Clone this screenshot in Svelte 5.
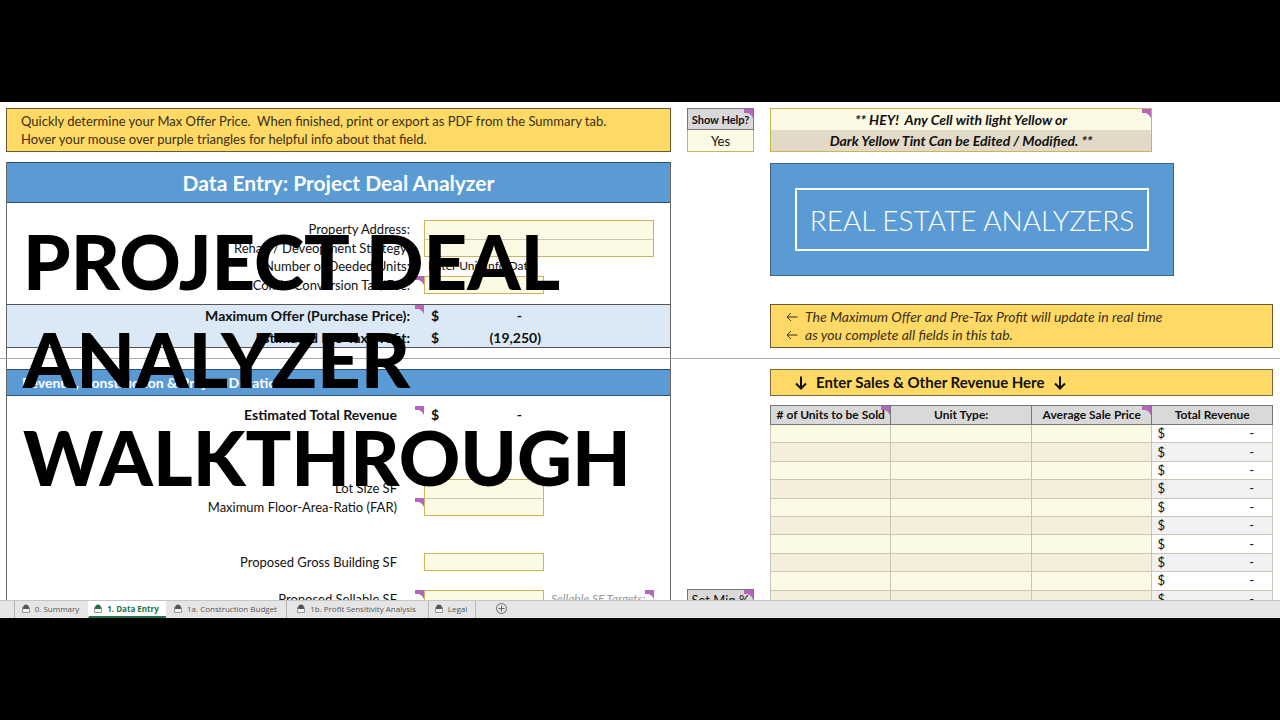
<script lang="ts">
  const revenueRows = Array.from({ length: 10 }, (_, i) => i + 1);

  const tabs = [
    { name: "0. Summary", width: 74 },
    { name: "1. Data Entry", width: 78 },
    { name: "1a. Construction Budget", width: 120 },
    { name: "1b. Profit Sensitivity Analysis", width: 142 },
    { name: "Legal", width: 47 },
  ];

  let activeTab: string = $state("1. Data Entry");
  let showHelp: string = $state("Yes");
</script>

{#snippet marker()}
  <svg class="marker" viewBox="0 0 9 9" aria-hidden="true">
    <path d="M0 0H9V9L7 6L4 4H0Z" fill="#b565bd" />
  </svg>
{/snippet}

{#snippet arrowLeft()}
  <svg class="arrow-left" viewBox="0 0 12 10" aria-hidden="true">
    <path d="M11.5 5H1M5 1L1 5L5 9" />
  </svg>
{/snippet}

{#snippet arrowDown()}
  <svg class="arrow-down" viewBox="0 0 12 14" aria-hidden="true">
    <path d="M6 0.5V12.5M1 7.5L6 12.5L11 7.5" />
  </svg>
{/snippet}

<div class="stage">
  <main class="workbook">
    <section class="pane frozen">
      <div class="column">
        <p class="note intro">
          Quickly determine your Max Offer Price.&nbsp; When finished, print or
          export as PDF from the Summary tab.<br />Hover your mouse over purple
          triangles for helpful info about that field.
        </p>
        <div class="panel entry">
          <h2>Data Entry: Project Deal Analyzer</h2>
          <div class="fields">
            <label for="address">Property Address:</label>
            <input id="address" class="wide" />
            <label for="strategy">Rehab / Deveopment Strategy:</label>
            <input id="strategy" class="wide joined" />
            <span class="label">Number of Deeded Units:</span>
            <span class="hint">Enter Unit Info Data</span>
            <label for="tax">Condo Conversion Tax/Fee:{@render marker()}</label>
            <input id="tax" />
          </div>
          <div class="totals">
            <span class="label">
              Maximum Offer (Purchase Price):{@render marker()}
            </span>
            <span class="money"><span>$</span><span class="dash">-</span></span>
            <span class="label">Estimated Pre-Tax Profit:</span>
            <span class="money"><span>$</span><span>(19,250)</span></span>
          </div>
        </div>
      </div>

      <div class="column">
        <div class="help">
          <label for="help">Show Help?{@render marker()}</label>
          <select id="help" bind:value={showHelp}>
            <option>Yes</option>
            <option>No</option>
          </select>
        </div>
      </div>

      <div class="column">
        <div class="legend">
          <p>** HEY!&nbsp; Any Cell with light Yellow or</p>
          <p class="dark">Dark Yellow Tint Can be Edited / Modified. **</p>
          {@render marker()}
        </div>
        <div class="brand"><span>REAL ESTATE ANALYZERS</span></div>
        <p class="note live">
          {@render arrowLeft()}The Maximum Offer and Pre-Tax Profit will update
          in real time<br />{@render arrowLeft()}as you complete all fields in
          this tab.
        </p>
      </div>
    </section>

    <section class="pane scrolled">
      <div class="panel revenue">
        <h3>Revenue, Construction &amp; Project Duration</h3>
        <div class="inputs">
          <span class="label strong r1">
            Estimated Total Revenue{@render marker()}
          </span>
          <span class="money strong r1">
            <span>$</span><span class="dash">-</span>
          </span>
          <label class="r5" for="lot">Lot Size SF</label>
          <input class="r5" id="lot" />
          <label class="r6" for="far">
            Maximum Floor-Area-Ratio (FAR){@render marker()}
          </label>
          <input class="r6 joined" id="far" />
          <label class="r9" for="gross">Proposed Gross Building SF</label>
          <input class="r9" id="gross" />
          <label class="r11" for="sellable">
            Proposed Sellable SF{@render marker()}
          </label>
          <input class="r11" id="sellable" />
          <span class="targets r11">
            Sellable SF Targets:{@render marker()}
          </span>
        </div>
      </div>

      <div class="column end">
        <div class="minimum">Set Min %{@render marker()}</div>
      </div>

      <div class="column sales">
        <h3 class="banner">
          {@render arrowDown()}Enter Sales &amp; Other Revenue Here{@render arrowDown()}
        </h3>
        <table>
          <thead>
            <tr>
              <th class="units"># of Units to be Sold{@render marker()}</th>
              <th class="type">Unit Type:</th>
              <th class="price">Average Sale Price{@render marker()}</th>
              <th>Total Revenue</th>
            </tr>
          </thead>
          <tbody>
            {#each revenueRows as row}
              <tr>
                <td><input aria-label="Units to be sold, row {row}" /></td>
                <td><input aria-label="Unit type, row {row}" /></td>
                <td><input aria-label="Average sale price, row {row}" /></td>
                <td class="total">
                  <div><span>$</span><span>-</span></div>
                </td>
              </tr>
            {/each}
          </tbody>
        </table>
      </div>
    </section>

    <h1>
      <span>PROJECT DEAL</span>
      <span>ANALYZER</span>
      <span>WALKTHROUGH</span>
    </h1>
  </main>

  <nav class="tabs">
    {#each tabs as tab}
      <button
        class={activeTab === tab.name ? "tab active" : "tab"}
        style="width: {tab.width}px"
        onclick={() => (activeTab = tab.name)}
      >
        <svg viewBox="0 0 8 9" aria-hidden="true">
          <path d="M0.5 3.5H7.5V8.5H0.5Z" fill="#f4f4f4" stroke="#999" />
          <path d="M1 5V3.5Q1.5 0.5 4 0.5T7 3.5V5Z" fill="currentColor" />
        </svg>
        {tab.name}
      </button>
    {/each}
    <button class="add" aria-label="New sheet">
      <svg viewBox="0 0 11 11" aria-hidden="true">
        <circle cx="5.5" cy="5.5" r="5" />
        <path d="M5.5 2.5V8.5M2.5 5.5H8.5" />
      </svg>
    </button>
  </nav>
</div>

<style>
  :global(body) {
    margin: 0;
    background: #000;
  }

  .stage {
    min-height: 100vh;
    display: flex;
    flex-direction: column;
    justify-content: center;
    font-family: Lato, "Liberation Sans", sans-serif;
    font-size: 13px;
    line-height: 18px;
    color: #111;
  }

  .stage :global(*) {
    box-sizing: border-box;
  }

  h1,
  h2,
  h3,
  p {
    margin: 0;
  }

  .workbook {
    position: relative;
    height: 498px;
    overflow: hidden;
    background: #fff;
  }

  .pane {
    display: grid;
    grid-template-columns: 665fr 67px 503fr;
    column-gap: 16px;
    padding: 0 7px 0 6px;
  }

  .frozen {
    height: 257px;
    padding-top: 6px;
    border-bottom: 1px solid #aaa;
  }

  .column {
    display: flex;
    flex-direction: column;
  }

  .marker {
    position: absolute;
    top: 0;
    right: 0;
    width: 9px;
    height: 9px;
  }

  .note {
    background: #ffd966;
    border: 1px solid #6b5a2a;
    color: #3a2f14;
  }

  .intro {
    height: 44px;
    padding: 3px 14px;
    white-space: nowrap;
  }

  .panel {
    border: solid #666;
    border-width: 0 1px;
  }

  .entry {
    flex: 1;
    margin-top: 10px;
  }

  h2 {
    display: flex;
    align-items: center;
    justify-content: center;
    height: 41px;
    border: solid #2f4f73;
    border-width: 1px 0;
    background: #5b9bd5;
    color: #fff;
    font-size: 21px;
    font-weight: 700;
  }

  .fields,
  .totals,
  .inputs {
    display: grid;
    grid-template-columns: 417fr 120fr 110fr 16fr;
  }

  .fields {
    height: 74px;
    margin: 17px 0 10px;
    grid-template-rows: repeat(4, 1fr);
  }

  label,
  .label {
    position: relative;
    grid-column: 1;
    text-align: right;
    padding-right: 14px;
    white-space: nowrap;
  }

  input {
    grid-column: 2;
    min-width: 0;
    width: 100%;
    height: 100%;
    padding: 0 4px;
    border: 1px solid #c9b458;
    border-radius: 0;
    background: #fcf9e4;
    font: inherit;
  }

  input.wide {
    grid-column: 2 / 4;
  }

  input:has(+ label + .joined) {
    border-bottom: 0;
  }

  input.joined {
    border-top-color: #ccc8b0;
  }

  .hint {
    padding-left: 4px;
    font-size: 12px;
    white-space: nowrap;
  }

  .totals {
    height: 44px;
    grid-template-rows: 22px 20px;
    line-height: 22px;
    border: solid #555;
    border-width: 1px 0;
    background: #dbe9f6;
    font-size: 14px;
    font-weight: 700;
  }

  .money {
    display: flex;
    justify-content: space-between;
    padding: 0 3px 0 7px;
  }

  .dash {
    padding-right: 19px;
  }

  .strong {
    font-size: 14px;
    font-weight: 700;
  }

  .help {
    height: 44px;
    display: grid;
    grid-template-rows: 22px 22px;
  }

  .help label,
  .minimum {
    position: relative;
    padding: 0;
    text-align: center;
    line-height: 21px;
    border: 1px solid #777;
    background: #d9d9d9;
  }

  .help label {
    font-size: 11px;
    font-weight: 700;
  }

  select {
    appearance: none;
    border: 1px solid #c9b458;
    border-top: 0;
    border-radius: 0;
    background: #fcf9e4;
    font: inherit;
    color: inherit;
    text-align: center;
    text-align-last: center;
  }

  .legend {
    position: relative;
    width: 76%;
    height: 44px;
    border: 1px solid #c9b458;
    background: #fcf9e4;
    font-size: 14px;
    font-weight: 700;
    font-style: italic;
    line-height: 21px;
    text-align: center;
  }

  .legend .dark {
    background: #e2dac6;
  }

  .brand {
    width: 404px;
    height: 113px;
    margin: 11px 0 28px;
    padding: 24px;
    border: 1px solid #44617e;
    background: #5b9bd5;
    display: flex;
  }

  .brand span {
    flex: 1;
    border: 2px solid #fff;
    color: #fff;
    font-size: 28px;
    font-weight: 300;
    line-height: 60px;
    text-align: center;
    white-space: nowrap;
  }

  .live {
    height: 44px;
    padding: 3px 15px;
    font-size: 14px;
    font-style: italic;
    white-space: nowrap;
  }

  .arrow-left {
    width: 12px;
    height: 10px;
    margin-right: 7px;
    fill: none;
    stroke: #3a2f14;
  }

  .arrow-down {
    width: 12px;
    height: 14px;
    fill: none;
    stroke: #111;
    stroke-width: 2;
  }

  .revenue {
    padding-top: 10px;
  }

  h3 {
    height: 27px;
    padding-left: 15px;
    border: solid #2f4f73;
    border-width: 1px 0;
    background: #5b9bd5;
    color: #fff;
    font-size: 14px;
    font-weight: 700;
    line-height: 25px;
  }

  .inputs {
    height: 202px;
    margin-top: 10px;
    grid-template-rows: repeat(11, 1fr);
  }

  .inputs label,
  .inputs .label {
    padding-right: 27px;
  }

  .r1 {
    grid-row: 1;
  }

  .r5 {
    grid-row: 5;
  }

  .r6 {
    grid-row: 6;
  }

  .r9 {
    grid-row: 9;
  }

  .r11 {
    grid-row: 11;
  }

  .targets {
    position: relative;
    grid-column: 3;
    padding-left: 7px;
    color: #999;
    font-size: 12px;
    font-style: italic;
    white-space: nowrap;
  }

  .end {
    justify-content: flex-end;
  }

  .minimum {
    height: 20px;
  }

  .sales {
    padding-top: 10px;
  }

  .banner {
    display: flex;
    align-items: center;
    gap: 9px;
    padding-left: 24px;
    border: 1px solid #7a6a3a;
    background: #ffd966;
    color: #111;
    font-size: 15px;
  }

  table {
    width: 100%;
    height: 204px;
    margin-top: 9px;
    border-collapse: collapse;
    table-layout: fixed;
    border: 1px solid #777;
  }

  th {
    position: relative;
    height: 19px;
    padding: 0;
    border: 1px solid #777;
    background: #d9d9d9;
    font-size: 12px;
    line-height: 18px;
    white-space: nowrap;
  }

  .units {
    width: 24%;
  }

  .type {
    width: 28%;
  }

  .price {
    width: 24%;
  }

  td {
    padding: 0;
    border: 1px solid #c9c6b8;
    background: #fcf9e4;
    line-height: 17px;
  }

  td input {
    display: block;
    height: 17px;
    border: 0;
    background: transparent;
  }

  tr:nth-child(even) td {
    background: #f6eedc;
  }

  td.total {
    border-left-color: #777;
    background: #fff;
  }

  tr:nth-child(even) td.total {
    background: #f1f1f1;
  }

  .total div {
    display: flex;
    justify-content: space-between;
    padding: 0 18px 0 5px;
  }

  h1 {
    position: absolute;
    top: 110px;
    left: 23px;
    color: #000;
    font-family: Lato, sans-serif;
    font-size: 76px;
    font-weight: 900;
    line-height: 98px;
    pointer-events: none;
  }

  h1 span {
    display: block;
    white-space: nowrap;
  }

  .tabs {
    display: flex;
    height: 18px;
    padding-left: 14px;
    border-top: 1px solid #c6c6c6;
    background: #e5e5e5;
  }

  .tab {
    display: flex;
    align-items: center;
    justify-content: center;
    gap: 5px;
    padding: 0 2px 3px 0;
    border: 0;
    border-left: 1px solid #b5b5b5;
    background: none;
    color: #555;
    font-family: "Open Sans", "Noto Sans", sans-serif;
    font-size: 8px;
    white-space: nowrap;
  }

  .tab svg {
    width: 8px;
    height: 9px;
  }

  .tab.active {
    padding-bottom: 1px;
    border-bottom: 2px solid #217346;
    border-left-color: #fff;
    background: #fff;
    color: #217346;
    font-weight: 700;
  }

  .tab.active + .tab {
    border-left-color: transparent;
  }

  .add {
    display: flex;
    align-items: center;
    padding: 0 20px 2px;
    border: 0;
    border-left: 1px solid #b5b5b5;
    background: none;
  }

  .add svg {
    width: 11px;
    height: 11px;
    fill: none;
    stroke: #666;
  }
</style>
